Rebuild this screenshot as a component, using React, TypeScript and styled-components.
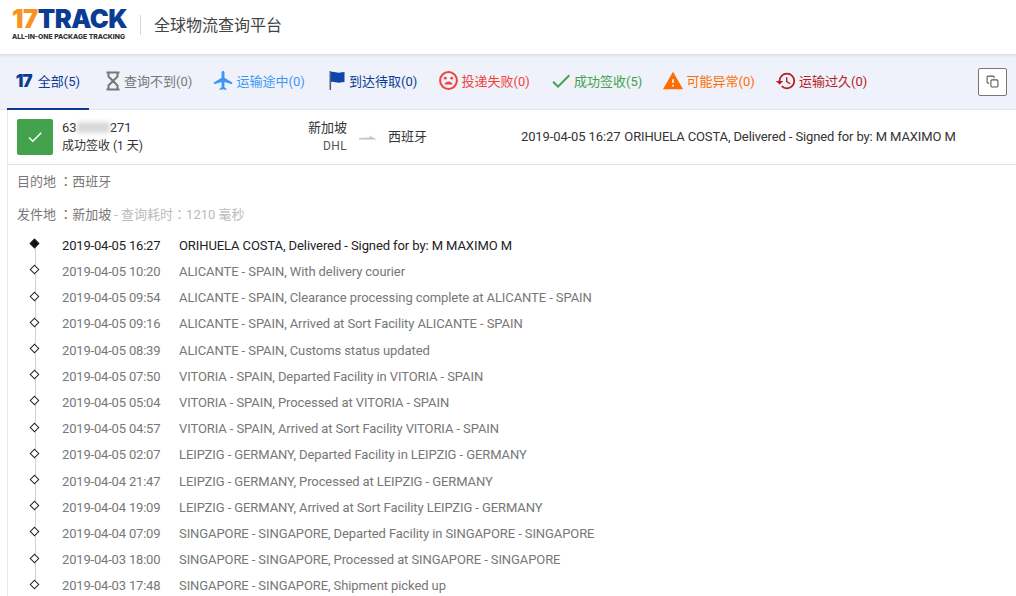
import React from 'react';
import styled, {createGlobalStyle} from 'styled-components';
import {MdCheck, MdFlight, MdHistory, MdWarning} from 'react-icons/md';
import {FiCopy} from 'react-icons/fi';

const GlobalStyle = createGlobalStyle`
  html, body {
    margin: 0;
    padding: 0;
    background: #ffffff;
    overflow: hidden;
  }
  body {
    font-family: Roboto, "Noto Sans CJK SC", sans-serif;
    font-size: 13px;
    color: #333333;
  }
`;

const Page = styled.div`
  width: 1016px;
  height: 596px;
  overflow: hidden;
  background: #ffffff;
`;

const Header = styled.header`
  height: 54px;
  display: flex;
  align-items: center;
  padding: 0 0 5px 12px;
  box-sizing: border-box;
  background: #ffffff;
  box-shadow: 0 1px 3px rgba(0, 0, 0, 0.14);
  position: relative;
`;

const Logo = styled.div`
  width: 115px;
  display: flex;
  flex-direction: column;
`;

const LogoMark = styled.div`
  font-family: Inter, Roboto, sans-serif;
  font-weight: 900;
  font-size: 25.5px;
  line-height: 22px;
  letter-spacing: -0.5px;
  color: #0b3c94;
  white-space: nowrap;
`;

const LogoAccent = styled.span`
  color: #f7931e;
`;

const LogoTagline = styled.div`
  font-family: Inter, Roboto, sans-serif;
  font-weight: 800;
  font-size: 6.8px;
  line-height: 9px;
  margin-top: 2px;
  color: #333333;
  white-space: nowrap;
`;

const HeaderDivider = styled.span`
  width: 1px;
  height: 20px;
  margin: 0 13px;
  background: #d8d8d8;
`;

const HeaderTitle = styled.h1`
  margin: 0 0 2px;
  font-size: 16px;
  font-weight: 400;
  color: #444444;
`;

const TabBar = styled.nav`
  height: 56px;
  display: flex;
  align-items: stretch;
  padding: 0 9px 0 7px;
  background: #eff2fa;
  border-bottom: 1px solid #e2e2e2;
  box-sizing: border-box;
`;

const Tab = styled.div<{$color: string; $active?: boolean}>`
  flex: ${props => (props.$active ? '0 0 82px' : '0 0 112.5px')};
  display: flex;
  align-items: center;
  justify-content: ${props => (props.$active ? 'center' : 'flex-end')};
  gap: 4px;
  padding-bottom: 1px;
  padding-right: ${props => (props.$active ? '0' : '16.5px')};
  margin-right: ${props => (props.$active ? '7px' : '0')};
  margin-bottom: -1px;
  color: ${props => props.$color};
  white-space: nowrap;
  box-sizing: border-box;
  border-bottom: 2px solid ${props => (props.$active ? '#0b3c94' : 'transparent')};
  & > svg {
    flex: none;
  }
`;

const TabLabel = styled.span`
  width: 68px;
`;

const SmallLogo = styled.span`
  width: 18px;
  font-family: Inter, Roboto, sans-serif;
  font-weight: 900;
  font-size: 17px;
  letter-spacing: -1px;
  color: #0b3c94;
`;

const CopyButton = styled.button`
  margin: auto 0 auto auto;
  width: 29px;
  height: 28px;
  padding: 0;
  display: flex;
  align-items: center;
  justify-content: center;
  background: #ffffff;
  color: #555555;
  border: 1px solid #777777;
  border-radius: 2px;
`;

const Content = styled.main`
  margin-left: 7px;
  border-left: 1px solid #e6e6e6;
`;

const Summary = styled.section`
  height: 55px;
  display: flex;
  align-items: center;
  padding-left: 9px;
  border-bottom: 1px solid #e2e2e2;
  box-sizing: border-box;
`;

const StatusBadge = styled.div`
  width: 36px;
  height: 36px;
  display: flex;
  align-items: center;
  justify-content: center;
  border-radius: 2px;
  background: #43a24c;
  color: #ffffff;
`;

const TrackingInfo = styled.div`
  width: 245px;
  margin-left: 9px;
  line-height: 18px;
  color: #333333;
`;

const TrackingState = styled.div`
  font-size: 12px;
`;

const BlurredDigits = styled.span`
  display: inline-block;
  width: 33px;
  height: 11px;
  vertical-align: -1px;
  background: #d9d9d9;
  filter: blur(2px);
`;

const Route = styled.div`
  display: flex;
  align-items: center;
  width: 214px;
  padding-bottom: 4px;
  box-sizing: border-box;
`;

const RouteOrigin = styled.div`
  width: 40px;
  text-align: right;
  line-height: 18px;
  margin-top: 4px;
`;

const Carrier = styled.div`
  font-size: 12px;
  letter-spacing: 0.4px;
  color: #555555;
`;

const RouteArrow = styled.svg`
  margin: 6px 11px 0 12px;
`;

const LatestEvent = styled.div`
  white-space: nowrap;
  letter-spacing: -0.12px;
  padding-bottom: 1px;
`;

const LatestEventTime = styled.span`
  margin-right: 4px;
`;

const MetaRow = styled.div<{$height: number}>`
  height: ${props => props.$height}px;
  display: flex;
  align-items: center;
  padding: 0 0 3px 9px;
  box-sizing: border-box;
  color: #777777;
  white-space: pre;
`;

const MetaColon = styled.span`
  font-family: "Noto Sans CJK JP", sans-serif;
`;

const MetaNote = styled.span`
  color: #bbbbbb;
  margin-left: 3px;
`;

const Timeline = styled.ol`
  list-style: none;
  margin: 0;
  padding: 0.3px 0 0 27px;
`;

const Event = styled.li<{$current?: boolean}>`
  position: relative;
  height: 26.2px;
  display: flex;
  align-items: center;
  color: ${props => (props.$current ? '#222222' : '#777777')};
  &:not(:last-child)::after {
    content: '';
    position: absolute;
    left: 0;
    top: 11px;
    height: 26px;
    width: 1px;
    background: #d0d0d0;
  }
`;

const Marker = styled.span<{$current?: boolean}>`
  position: absolute;
  left: -4px;
  top: 8px;
  width: 7px;
  height: 7px;
  transform: rotate(45deg);
  box-sizing: border-box;
  z-index: 1;
  background: ${props => (props.$current ? '#111111' : '#ffffff')};
  border: 1px solid #222222;
`;

const EventTime = styled.span`
  width: 117px;
  margin-left: 27px;
  flex: none;
  letter-spacing: -0.18px;
`;

const EventText = styled.span`
  white-space: nowrap;
  letter-spacing: -0.09px;
`;

const HourglassIcon = () => (
  <svg width="14" height="20" viewBox="0 0 14 20" fill="none" stroke="#777777" strokeWidth="2">
    <path d="M0.500 1.500h13M0.500 18.500h13M2.500 2v3.500L7 10l-4.500 4.500V18M11.500 2v3.500L7 10l4.500 4.500V18" />
  </svg>
);

const FlagIcon = () => (
  <svg width="16" height="19" viewBox="0 0 16 19">
    <rect x="0.5" y="0" width="1.6" height="19" fill="#555e7a" />
    <path d="M2 1C5 0 8 2.400 11 1.600c1.600-.4 3-.6 4.500-.6v10c-1.500 0-3 .2-4.500.6C8 12.400 5 10 2 11Z" fill="#0b46a8" />
  </svg>
);

const SadFaceIcon = () => (
  <svg width="19" height="19" viewBox="0 0 19 19">
    <circle cx="9.5" cy="9.5" r="8.4" fill="none" stroke="#f0433a" strokeWidth="2" />
    <circle cx="6.3" cy="7.2" r="1.4" fill="#f0433a" />
    <circle cx="12.7" cy="7.2" r="1.4" fill="#f0433a" />
    <path d="M5.400 13.600c.6-2.200 2.200-3.200 4.100-3.200s3.500 1 4.100 3.200Z" fill="#f0433a" />
  </svg>
);

const tabs = [
  {label: '查询不到(0)', color: '#777777', icon: <HourglassIcon />},
  {label: '运输途中(0)', color: '#3d96f5', icon: <MdFlight size={23} style={{marginRight: -2}} />},
  {label: '到达待取(0)', color: '#0b3c94', icon: <FlagIcon />},
  {label: '投递失败(0)', color: '#f0433a', icon: <SadFaceIcon />},
  {label: '成功签收(5)', color: '#43a24c', icon: <MdCheck size={24} style={{marginRight: -3}} />},
  {label: '可能异常(0)', color: '#ff6d00', icon: <MdWarning size={22} style={{marginRight: -1}} />},
  {label: '运输过久(0)', color: '#b71c1c', icon: <MdHistory size={22} style={{marginRight: -2}} />}
];

const events = [
  ['2019-04-05 16:27', 'ORIHUELA COSTA, Delivered - Signed for by: M MAXIMO M'],
  ['2019-04-05 10:20', 'ALICANTE - SPAIN, With delivery courier'],
  ['2019-04-05 09:54', 'ALICANTE - SPAIN, Clearance processing complete at ALICANTE - SPAIN'],
  ['2019-04-05 09:16', 'ALICANTE - SPAIN, Arrived at Sort Facility ALICANTE - SPAIN'],
  ['2019-04-05 08:39', 'ALICANTE - SPAIN, Customs status updated'],
  ['2019-04-05 07:50', 'VITORIA - SPAIN, Departed Facility in VITORIA - SPAIN'],
  ['2019-04-05 05:04', 'VITORIA - SPAIN, Processed at VITORIA - SPAIN'],
  ['2019-04-05 04:57', 'VITORIA - SPAIN, Arrived at Sort Facility VITORIA - SPAIN'],
  ['2019-04-05 02:07', 'LEIPZIG - GERMANY, Departed Facility in LEIPZIG - GERMANY'],
  ['2019-04-04 21:47', 'LEIPZIG - GERMANY, Processed at LEIPZIG - GERMANY'],
  ['2019-04-04 19:09', 'LEIPZIG - GERMANY, Arrived at Sort Facility LEIPZIG - GERMANY'],
  ['2019-04-04 07:09', 'SINGAPORE - SINGAPORE, Departed Facility in SINGAPORE - SINGAPORE'],
  ['2019-04-03 18:00', 'SINGAPORE - SINGAPORE, Processed at SINGAPORE - SINGAPORE'],
  ['2019-04-03 17:48', 'SINGAPORE - SINGAPORE, Shipment picked up']
];

const App: React.FC = () => (
  <Page>
    <GlobalStyle />
    <Header>
      <Logo>
        <LogoMark>
          <LogoAccent>17</LogoAccent>TRACK
        </LogoMark>
        <LogoTagline>ALL-IN-ONE PACKAGE TRACKING</LogoTagline>
      </Logo>
      <HeaderDivider />
      <HeaderTitle>全球物流查询平台</HeaderTitle>
    </Header>
    <TabBar>
      <Tab $color="#0b3c94" $active>
        <SmallLogo>17</SmallLogo>
        全部(5)
      </Tab>
      {tabs.map(tab => (
        <Tab key={tab.label} $color={tab.color}>
          {tab.icon}
          <TabLabel>{tab.label}</TabLabel>
        </Tab>
      ))}
      <CopyButton>
        <FiCopy size={13} />
      </CopyButton>
    </TabBar>
    <Content>
      <Summary>
        <StatusBadge>
          <MdCheck size={18} />
        </StatusBadge>
        <TrackingInfo>
          <div>
            63
            <BlurredDigits />
            271
          </div>
          <TrackingState>成功签收 (1 天)</TrackingState>
        </TrackingInfo>
        <Route>
          <RouteOrigin>
            新加坡
            <Carrier>DHL</Carrier>
          </RouteOrigin>
          <RouteArrow width="18" height="6" viewBox="0 0 18 6">
            <path d="M0 3 L11 2.600 L10 0.500 L18 4.500 L0 4.500 Z" fill="#c4c4c4" />
          </RouteArrow>
          西班牙
        </Route>
        <LatestEvent>
          <LatestEventTime>2019-04-05 16:27</LatestEventTime>
          ORIHUELA COSTA, Delivered - Signed for by: M MAXIMO M
        </LatestEvent>
      </Summary>
      <MetaRow $height={33}>
        目的地 <MetaColon>：</MetaColon>西班牙
      </MetaRow>
      <MetaRow $height={34}>
        发件地 <MetaColon>：</MetaColon>新加坡
        <MetaNote>
          - 查询耗时<MetaColon>：</MetaColon>1210 毫秒
        </MetaNote>
      </MetaRow>
      <Timeline>
        {events.map(([time, text], index) => (
          <Event key={time} $current={index === 0}>
            <Marker $current={index === 0} />
            <EventTime>{time}</EventTime>
            <EventText>{text}</EventText>
          </Event>
        ))}
      </Timeline>
    </Content>
  </Page>
);

export default App;
